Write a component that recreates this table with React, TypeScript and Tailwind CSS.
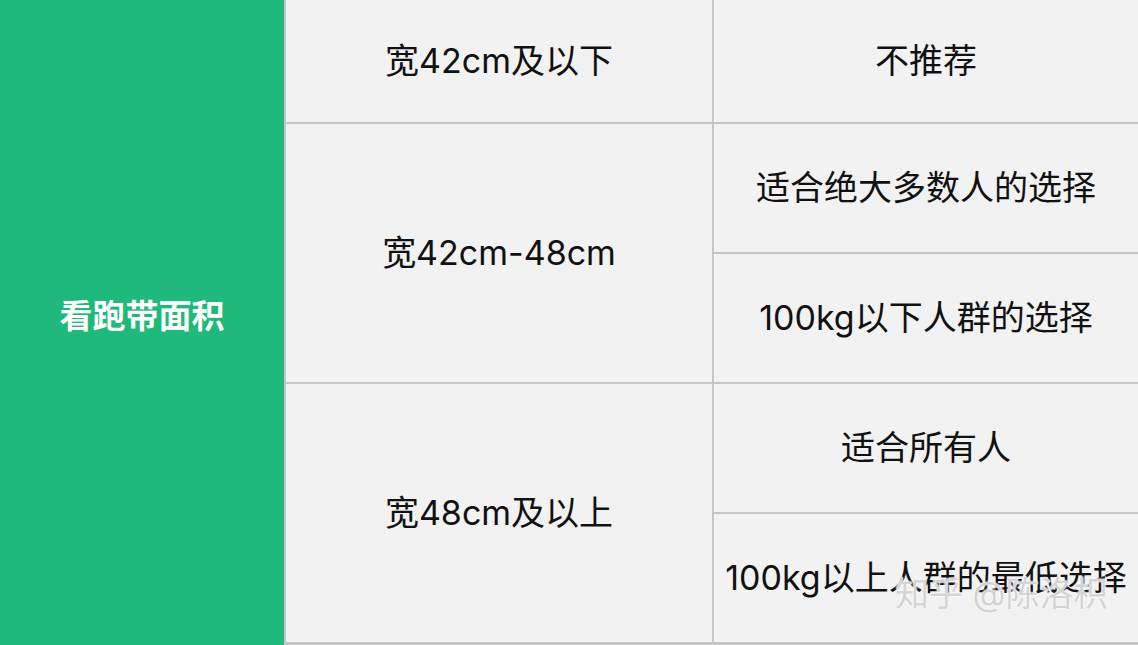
import React from "react";

const font = { fontFamily: 'Inter, "Noto Sans CJK SC", "Noto Sans", sans-serif' };

function Cell({ children, className = "" }: { children: React.ReactNode; className?: string }) {
  return (
    <div className={`bg-[#f2f2f2] flex items-center justify-center pb-[2px] text-[34px] text-[#111111] whitespace-nowrap ${className}`}>
      {children}
    </div>
  );
}

export default function App() {
  return (
    <div className="w-[1138px] h-[645px] flex bg-[#c6c6c6] overflow-hidden relative" style={font}>
      <div className="w-[284px] h-full bg-[#1fb97b] flex items-center justify-center pb-[11px] text-white text-[33px] font-bold">
        看跑带面积
      </div>
      <div className="ml-[2px] pb-[3px] grid grid-cols-[426px_424px] grid-rows-[122px_128px_128px_128px_128px] gap-[2px]">
        <Cell>宽42cm及以下</Cell>
        <Cell>不推荐</Cell>
        <Cell className="row-span-2">宽42cm-48cm</Cell>
        <Cell>适合绝大多数人的选择</Cell>
        <Cell>100kg以下人群的选择</Cell>
        <Cell className="row-span-2">宽48cm及以上</Cell>
        <Cell>适合所有人</Cell>
        <Cell>100kg以上人群的最低选择</Cell>
      </div>
      <div
        className="absolute left-[895px] top-[568px] text-[34px] text-[#d4d4d4] whitespace-nowrap"
        style={{ textShadow: "0 0 2px #ffffff, 0 0 2px #ffffff" }}
      >
        知乎 @陈洛枳
      </div>
    </div>
  );
}
